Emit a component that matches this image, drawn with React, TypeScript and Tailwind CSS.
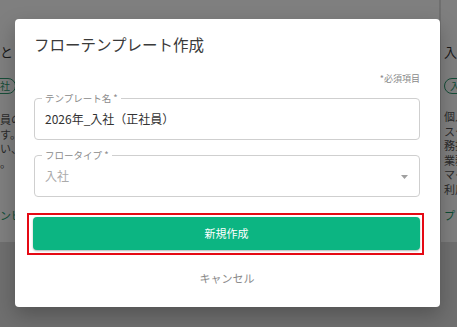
import React from 'react';

const font = { fontFamily: '"Noto Sans CJK JP", "Noto Sans", sans-serif' };

const leftLines = ['員の登録を行います。', 'す。', 'い、', '。'];
const rightLines = [
  '個人情報の入力と書類提出',
  'スタッフ情報の登録',
  '務担当者による確認',
  '業務アカウントの発行',
  'マイナンバーの提出',
  '利用規約への同意',
];

const Tag: React.FC<{ className?: string }> = ({ className = '' }) => (
  <span
    className={`inline-flex h-[16px] items-center rounded-full border border-[#2c9a70] px-[5px] text-[10px] leading-none text-[#2c9a70] ${className}`}
  >
    入社
  </span>
);

const App: React.FC = () => {
  return (
    <div className="relative h-[327px] w-[457px] overflow-hidden bg-[#dedede]" style={font}>
      {/* Background cards */}
      <div className="flex gap-[2px]">
        <div className="-ml-4 flex h-[242px] w-[455px] shrink-0 flex-col bg-white px-4 pt-[43px]">
          <div className="whitespace-nowrap text-[13px] leading-[18px] text-[#333]">と（正社員）</div>
          <div className="mt-[10px] -ml-[16px]">
            <Tag />
          </div>
          <div className="mt-[17px] text-[11px] leading-[14.6px] text-[#555]">
            {leftLines.map((l) => (
              <div key={l} className="whitespace-nowrap">{l}</div>
            ))}
          </div>
          <div className="mt-auto mb-[19px] whitespace-nowrap text-[11px] leading-[16px] text-[#1a9b6c]">
            ンビュー
          </div>
        </div>
        <div className="flex h-[242px] w-[300px] shrink-0 flex-col bg-white pl-[3px] pt-[43px]">
          <div className="whitespace-nowrap text-[13px] leading-[18px] text-[#333]">入社手続き（正社員）</div>
          <div className="mt-[10px]">
            <Tag />
          </div>
          <div className="mt-[14px] text-[11px] leading-[14.6px] text-[#555]">
            {rightLines.map((l) => (
              <div key={l} className="whitespace-nowrap">{l}</div>
            ))}
          </div>
          <div className="mt-auto mb-[19px] whitespace-nowrap text-[11px] leading-[16px] text-[#1a9b6c]">
            プレビュー
          </div>
        </div>
      </div>

      {/* Overlay + dialog */}
      <div className="absolute inset-0 flex items-start bg-black/50 pl-[15px] pt-[19px]">
        <div className="flex w-[425px] flex-col rounded-[4px] bg-white pb-[21px] pl-[19px] pr-[20px] pt-[14px] shadow-[0_8px_20px_rgba(0,0,0,0.25)]">
          <h2 className="text-[15.5px] font-normal leading-[22px] text-[#3a3a3a]">フローテンプレート作成</h2>

          <div className="mt-[18px] text-right text-[9px] leading-[12px] text-[#8a8a8a]">*必須項目</div>

          {/* Template name field */}
          <div className="relative mt-[13px] flex h-[42px] items-center rounded-[4px] border border-[#cfcfcf] pl-[10px]">
            <span className="absolute -top-[7px] left-[7px] bg-white px-[3px] text-[9.5px] leading-[12px] text-[#8a8a8a]">
              テンプレート名 *
            </span>
            <span className="text-[12px] text-[#333]">2026年_入社（正社員）</span>
          </div>

          {/* Flow type field */}
          <div className="relative mt-[15px] flex h-[42px] items-center justify-between rounded-[4px] border border-[#cfcfcf] pl-[10px] pr-[11px]">
            <span className="absolute -top-[7px] left-[7px] bg-white px-[3px] text-[9.5px] leading-[12px] text-[#8a8a8a]">
              フロータイプ *
            </span>
            <span className="text-[12px] text-[#ababab]">入社</span>
            <svg width="7" height="4" viewBox="0 0 7 4" className="mt-[1px]">
              <path d="M0 0 L7 0 L3.5 4 Z" fill="#a0a0a0" />
            </svg>
          </div>

          {/* Create button (highlighted) */}
          <div className="-ml-[7px] -mr-[4px] mt-[16px] border-2 border-[#e50914] pb-[3px] pl-[4px] pr-[2px] pt-[2px]">
            <button className="flex h-[33px] w-full items-center justify-center rounded-[4px] bg-[#0cb582] text-[11px] text-white shadow-[0_1px_2px_rgba(0,0,0,0.3)]">
              新規作成
            </button>
          </div>

          <button className="mt-[15px] text-center text-[11px] leading-[16px] text-[#8a8a8a]">キャンセル</button>
        </div>
      </div>
    </div>
  );
};

export default App;
